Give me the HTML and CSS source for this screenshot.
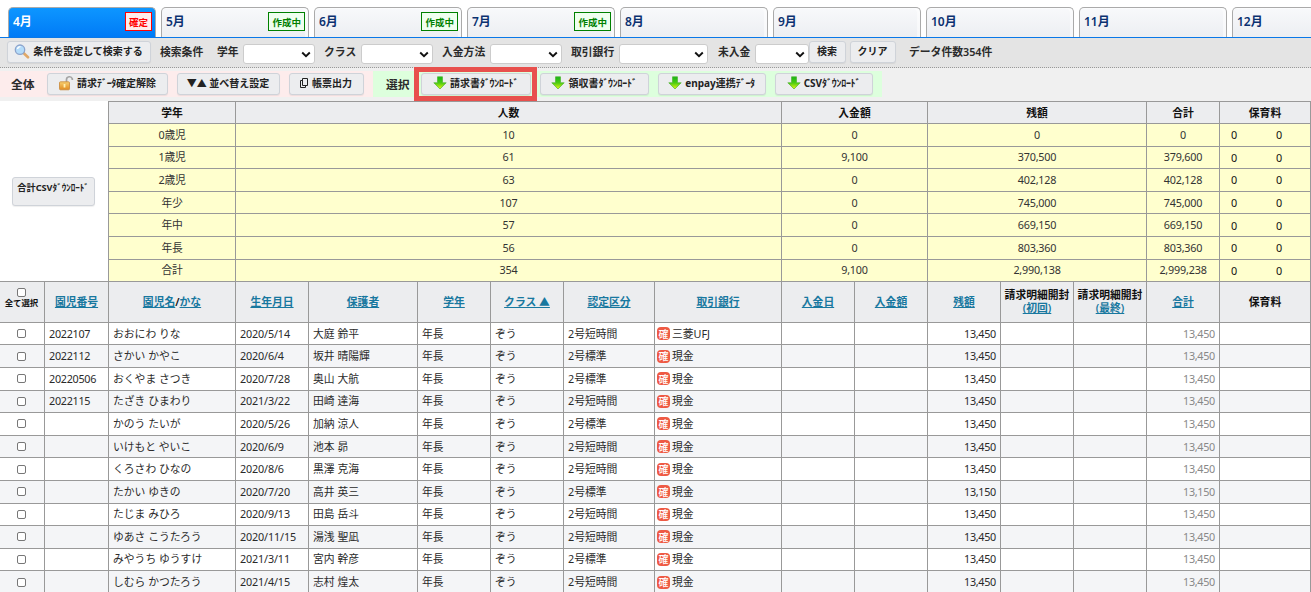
FILE: index.html
```html
<!DOCTYPE html>
<html lang="ja">
<head>
<meta charset="utf-8">
<title>請求一覧</title>
<link rel="stylesheet" href="styles.css">
</head>
<body>
<svg class="defs" width="0" height="0">
  <defs>
    <linearGradient id="green" x1="0" y1="0" x2="0" y2="1"><stop offset="0" stop-color="#18b418"/><stop offset=".5" stop-color="#4ccc10"/><stop offset="1" stop-color="#e8f818"/></linearGradient>
    <linearGradient id="gold" x1="0" y1="0" x2="0" y2="1"><stop offset="0" stop-color="#f8d070"/><stop offset="1" stop-color="#e08a20"/></linearGradient>
    <symbol id="down" viewBox="0 0 14 14"><path d="M4.500.8h5v6h3.700L7 13 .8 6.800h3.700z" fill="url(#green)" stroke="#4fb430" stroke-width=".7"/></symbol>
  </defs>
</svg>
<nav class="tabs">
  <div class="tab active">4月<span class="badge fixed">確定</span></div>
  <div class="tab">5月<span class="badge">作成中</span></div>
  <div class="tab">6月<span class="badge">作成中</span></div>
  <div class="tab">7月<span class="badge">作成中</span></div>
  <div class="tab">8月</div>
  <div class="tab">9月</div>
  <div class="tab">10月</div>
  <div class="tab">11月</div>
  <div class="tab">12月</div>
</nav>
<div class="search">
  <button class="btn b-cond"><svg width="16" height="15" viewBox="0 0 16 15"><path d="M9.500 9l4.500 4.300" stroke="#e0a868" stroke-width="2.600" stroke-linecap="round"/><circle cx="6" cy="5.700" r="4.700" fill="#b4dcfa" stroke="#8ca4cc" stroke-width="1.300"/><path d="M3.500 5a3 3 0 0 1 3-2.300" stroke="#fff" stroke-width="1.300" fill="none"/></svg>条件を設定して検索する</button>
  <span class="lab l-cond">検索条件</span>
  <span class="lab l-grade">学年</span><span class="sel"><svg width="10" height="7" viewBox="0 0 10 7"><path d="M1.200 1.500L5 5.200l3.800-3.700"/></svg></span>
  <span class="lab l-class">クラス</span><span class="sel"><svg width="10" height="7" viewBox="0 0 10 7"><path d="M1.200 1.500L5 5.200l3.800-3.700"/></svg></span>
  <span class="lab l-pay">入金方法</span><span class="sel"><svg width="10" height="7" viewBox="0 0 10 7"><path d="M1.200 1.500L5 5.200l3.800-3.700"/></svg></span>
  <span class="lab l-bank">取引銀行</span><span class="sel wide"><svg width="10" height="7" viewBox="0 0 10 7"><path d="M1.200 1.500L5 5.200l3.800-3.700"/></svg></span>
  <span class="lab l-unpaid">未入金</span><span class="sel small"><svg width="10" height="7" viewBox="0 0 10 7"><path d="M1.200 1.500L5 5.200l3.800-3.700"/></svg></span>
  <button class="btn b-find">検索</button>
  <button class="btn b-clear">クリア</button>
  <span class="lab l-count">データ件数354件</span>
</div>
<div class="actions">
  <div class="group all">
    <span class="title">全体</span>
    <button class="btn b-unlock"><svg width="16" height="16" viewBox="0 0 16 16"><path d="M8.500 7V4.500a3 3 0 0 1 5.800-.8V5" fill="none" stroke="#a4a4a4" stroke-width="1.700"/><rect x="1.500" y="6.800" width="10" height="8" rx="1" fill="url(#gold)" stroke="#c88838" stroke-width=".8"/><path d="M6.500 9v3.500" stroke="#fff0b0" stroke-width="1.800"/></svg><span>請求<span class="half">ﾃﾞｰﾀ</span>確定解除</span></button>
    <button class="btn b-sort">▼▲ 並べ替え設定</button>
    <button class="btn b-print"><svg width="9" height="11" viewBox="0 0 9 11"><path d="M2.500.5h5v7h-5zM2.500 2.500h-2v7h5v-2" fill="none" stroke="#222" stroke-width="1"/></svg>帳票出力</button>
  </div>
  <div class="group picked">
    <span class="title">選択</span>
    <div class="focus"><button class="btn b-bill"><svg width="14" height="14"><use href="#down"/></svg><span>請求書<span class="half">ﾀﾞｳﾝﾛｰﾄﾞ</span></span></button></div>
    <button class="btn b-receipt"><svg width="14" height="14"><use href="#down"/></svg><span>領収書<span class="half">ﾀﾞｳﾝﾛｰﾄﾞ</span></span></button>
    <button class="btn b-enpay"><svg width="14" height="14"><use href="#down"/></svg><span>enpay連携<span class="half">ﾃﾞｰﾀ</span></span></button>
    <button class="btn b-csv"><svg width="14" height="14"><use href="#down"/></svg><span>CSV<span class="half">ﾀﾞｳﾝﾛｰﾄﾞ</span></span></button>
  </div>
</div>
<section class="summary">
  <div class="side"><button class="btn b-total">合計CSV<span class="half">ﾀﾞｳﾝﾛｰﾄﾞ</span></button></div>
  <div class="totals">
    <div class="srow shead"><div>学年</div><div>人数</div><div>入金額</div><div>残額</div><div>合計</div><div>保育料</div></div>
    <div class="srow"><div>0歳児</div><div>10</div><div>0</div><div>0</div><div>0</div><div class="pair"><span>0</span><span>0</span></div></div>
    <div class="srow"><div>1歳児</div><div>61</div><div>9,100</div><div>370,500</div><div>379,600</div><div class="pair"><span>0</span><span>0</span></div></div>
    <div class="srow"><div>2歳児</div><div>63</div><div>0</div><div>402,128</div><div>402,128</div><div class="pair"><span>0</span><span>0</span></div></div>
    <div class="srow"><div>年少</div><div>107</div><div>0</div><div>745,000</div><div>745,000</div><div class="pair"><span>0</span><span>0</span></div></div>
    <div class="srow"><div>年中</div><div>57</div><div>0</div><div>669,150</div><div>669,150</div><div class="pair"><span>0</span><span>0</span></div></div>
    <div class="srow"><div>年長</div><div>56</div><div>0</div><div>803,360</div><div>803,360</div><div class="pair"><span>0</span><span>0</span></div></div>
    <div class="srow"><div>合計</div><div>354</div><div>9,100</div><div>2,990,138</div><div>2,999,238</div><div class="pair"><span>0</span><span>0</span></div></div>
  </div>
</section>
<section class="list">
  <div class="row head">
    <div class="checkall"><input type="checkbox"><span>全て選択</span></div>
    <div><a>園児番号</a></div><div><a>園児名</a>/<a>かな</a></div><div><a>生年月日</a></div><div><a>保護者</a></div><div><a>学年</a></div><div><a>クラス ▲</a></div><div><a>認定区分</a></div><div><a>取引銀行</a></div><div><a>入金日</a></div><div><a>入金額</a></div><div><a>残額</a></div>
    <div class="two"><span>請求明細開封</span><a>(初回)</a></div><div class="two"><span>請求明細開封</span><a>(最終)</a></div><div><a>合計</a></div><div>保育料</div>
  </div>
  <div class="row"><div><input type="checkbox"></div><div>2022107</div><div>おおにわ りな</div><div>2020/5/14</div><div>大庭 鈴平</div><div>年長</div><div>ぞう</div><div>2号短時間</div><div><b>確</b>三菱UFJ</div><div></div><div></div><div>13,450</div><div></div><div></div><div>13,450</div><div></div></div>
  <div class="row"><div><input type="checkbox"></div><div>2022112</div><div>さかい かやこ</div><div>2020/6/4</div><div>坂井 晴陽輝</div><div>年長</div><div>ぞう</div><div>2号標準</div><div><b>確</b>現金</div><div></div><div></div><div>13,450</div><div></div><div></div><div>13,450</div><div></div></div>
  <div class="row"><div><input type="checkbox"></div><div>20220506</div><div>おくやま さつき</div><div>2020/7/28</div><div>奥山 大航</div><div>年長</div><div>ぞう</div><div>2号標準</div><div><b>確</b>現金</div><div></div><div></div><div>13,450</div><div></div><div></div><div>13,450</div><div></div></div>
  <div class="row"><div><input type="checkbox"></div><div>2022115</div><div>たざき ひまわり</div><div>2021/3/22</div><div>田崎 達海</div><div>年長</div><div>ぞう</div><div>2号短時間</div><div><b>確</b>現金</div><div></div><div></div><div>13,450</div><div></div><div></div><div>13,450</div><div></div></div>
  <div class="row"><div><input type="checkbox"></div><div></div><div>かのう たいが</div><div>2020/5/26</div><div>加納 涼人</div><div>年長</div><div>ぞう</div><div>2号標準</div><div><b>確</b>現金</div><div></div><div></div><div>13,450</div><div></div><div></div><div>13,450</div><div></div></div>
  <div class="row"><div><input type="checkbox"></div><div></div><div>いけもと やいこ</div><div>2020/6/9</div><div>池本 昴</div><div>年長</div><div>ぞう</div><div>2号短時間</div><div><b>確</b>現金</div><div></div><div></div><div>13,450</div><div></div><div></div><div>13,450</div><div></div></div>
  <div class="row"><div><input type="checkbox"></div><div></div><div>くろさわ ひなの</div><div>2020/8/6</div><div>黒澤 克海</div><div>年長</div><div>ぞう</div><div>2号短時間</div><div><b>確</b>現金</div><div></div><div></div><div>13,450</div><div></div><div></div><div>13,450</div><div></div></div>
  <div class="row"><div><input type="checkbox"></div><div></div><div>たかい ゆきの</div><div>2020/7/20</div><div>高井 英三</div><div>年長</div><div>ぞう</div><div>2号標準</div><div><b>確</b>現金</div><div></div><div></div><div>13,150</div><div></div><div></div><div>13,150</div><div></div></div>
  <div class="row"><div><input type="checkbox"></div><div></div><div>たじま みひろ</div><div>2020/9/13</div><div>田島 岳斗</div><div>年長</div><div>ぞう</div><div>2号短時間</div><div><b>確</b>現金</div><div></div><div></div><div>13,450</div><div></div><div></div><div>13,450</div><div></div></div>
  <div class="row"><div><input type="checkbox"></div><div></div><div>ゆあさ こうたろう</div><div>2020/11/15</div><div>湯浅 聖凪</div><div>年長</div><div>ぞう</div><div>2号短時間</div><div><b>確</b>現金</div><div></div><div></div><div>13,450</div><div></div><div></div><div>13,450</div><div></div></div>
  <div class="row"><div><input type="checkbox"></div><div></div><div>みやうち ゆうすけ</div><div>2021/3/11</div><div>宮内 幹彦</div><div>年長</div><div>ぞう</div><div>2号標準</div><div><b>確</b>現金</div><div></div><div></div><div>13,450</div><div></div><div></div><div>13,450</div><div></div></div>
  <div class="row"><div><input type="checkbox"></div><div></div><div>しむら かつたろう</div><div>2021/4/15</div><div>志村 煌太</div><div>年長</div><div>ぞう</div><div>2号短時間</div><div><b>確</b>現金</div><div></div><div></div><div>13,450</div><div></div><div></div><div>13,450</div><div></div></div>
</section>
</body>
</html>
```

FILE: styles.css
```css
* { box-sizing: border-box; }
html, body { margin: 0; height: 592px; overflow: hidden; }
body {
  width: 1311px;
  background: #fff;
  color: #2a2a2a;
  font: 10.8px/14px "Noto Sans", "Noto Sans CJK JP", sans-serif;
}
.defs { position: absolute; }

/* Month tabs */
.tabs {
  display: flex;
  gap: 5px;
  height: 38px;
  padding: 7px 0 0 8px;
  border-bottom: 1px solid #0a78e8;
  overflow: hidden;
}
.tab {
  flex: 0 0 148px;
  display: flex;
  justify-content: space-between;
  height: 31px;
  padding: 4px 3px 0 4px;
  border: 1px solid #aaa;
  border-bottom: 0;
  border-radius: 5px 5px 0 0;
  background: linear-gradient(#f8f9fb, #eceef2);
  box-shadow: inset -3px 1px 1px #fff8;
  color: #0b3170;
  font-size: 12px;
  font-weight: 600;
  line-height: 20px;
}
.tab.active { background: linear-gradient(#0d96ff, #007af6); box-shadow: none; color: #fff; }
.badge {
  height: 19px;
  padding: 0 3px;
  border: 1px solid #008000;
  background: #efffef;
  color: #008000;
  font-size: 9.500px;
  font-weight: 700;
  line-height: 19px;
}
.badge.fixed { border-color: #f00; background: #ffecec; color: #f00; }

.btn {
  display: flex;
  flex: none;
  align-items: center;
  justify-content: center;
  height: 22px;
  margin: 0;
  padding: 0 1px 2px 0;
  border: 1px solid #cfd3d9;
  border-radius: 3px;
  background: #ecedef;
  box-shadow: 0 1px 1px #0001;
  color: #222;
  font: 700 10px/14px "Noto Sans", "Noto Sans CJK JP", sans-serif;
  white-space: nowrap;
}
.btn svg { margin-right: 3px; flex: none; }
.half { letter-spacing: -0.3px; }

/* Search conditions */
.search {
  display: flex;
  align-items: flex-start;
  height: 30px;
  padding: 3px 0 0 7px;
  border-bottom: 1px dotted #999;
  background: #e4e4e4;
}
.lab { flex: none; padding-top: 4px; font-weight: 600; white-space: nowrap; }
.l-cond { width: 66px; padding-left: 9px; }
.l-grade { width: 26px; }
.l-class { width: 46px; padding-left: 9px; }
.l-pay { width: 57px; padding-left: 9px; }
.l-bank { width: 57px; padding-left: 9px; }
.l-unpaid { width: 47px; padding-left: 10px; }
.l-count { padding-left: 13px; }
.sel {
  flex: none;
  display: flex;
  align-items: center;
  justify-content: flex-end;
  width: 72px;
  height: 20px;
  margin-top: 3px;
  padding: 0 3px 0 0;
  border: 1px solid #ccc;
  border-radius: 3px;
  background: #fff;
}
.sel.wide { width: 89px; }
.sel.small { width: 54px; }
.sel path { fill: none; stroke: #111; stroke-width: 1.9; }
.b-cond { width: 144px; }
.b-find { width: 37px; }
.b-clear { width: 46px; margin-left: 4px; }

/* Bulk actions */
.actions { display: flex; height: 33px; padding-top: 3px; background: #f0f0f0; }
.group { display: flex; height: 26px; align-items: flex-start; padding-top: 2px; }
.group.all { width: 373px; padding-left: 11px; background: #fdecec; }
.group.all .title { width: 36px; }
.group.picked { width: 509px; padding-left: 13px; background: #dfd; }
.title { flex: none; width: 35px; padding-top: 4px; font-size: 11.8px; font-weight: 600; }
.b-unlock { width: 121px; }
.b-sort { width: 103px; margin-left: 9px; }
.b-print { width: 75px; margin-left: 9px; }
.focus { position: relative; }
.focus::after {
  content: "";
  position: absolute;
  inset: -6px -6px -6px -7px;
  border: 5px solid #e8504d;
}
.b-bill { width: 110px; }
.b-receipt { width: 109px; margin-left: 9px; }
.b-enpay { width: 108px; margin-left: 9px; }
.b-csv { width: 98px; margin-left: 9px; }

/* Totals by grade */
.summary { display: flex; }
.side {
  width: 109px;
  padding: 76px 0 0 12px;
  border-right: 1px solid #999;
  border-bottom: 1px solid #999;
}
.b-total { width: 83px; height: 29px; padding-bottom: 8px; font-size: 9.200px; }
.b-total .half { letter-spacing: -0.1px; }
.totals { flex: none; width: 1202px; }
.srow { display: grid; grid-template-columns: 127px 546px 146px 219px 73px 91px; height: 22.6px; }
.srow > div {
  display: flex;
  align-items: center;
  justify-content: center;
  border-right: 1px solid #999;
  border-bottom: 1px solid #999;
  background: #ffffce;
  color: #333;
  letter-spacing: -0.2px;
}
.srow.shead { height: 23px; }
.srow.shead > div { border-top: 1px solid #999; background: #ecedef; color: #111; font-weight: 600; letter-spacing: 0; }
.srow > .pair { justify-content: flex-start; padding: 1px 0 0 11px; gap: 39px; color: #111; }

/* Children list */
.row {
  display: grid;
  grid-template-columns: 45px 64px 127px 73px 109px 73px 73px 91px 127px 73px 73px 73px 73px 73px 73px 91px;
  height: 22.6px;
}
.row > div {
  display: flex;
  align-items: center;
  padding-left: 4px;
  border-right: 1px solid #999;
  border-bottom: 1px solid #999;
  white-space: nowrap;
}
.row:nth-child(odd) > div { background: #f4f5f7; }
.row > div:first-child { justify-content: center; padding: 0 2px 0 0; }
.row > div:nth-child(2) { letter-spacing: -0.3px; }
.row > div:nth-child(4) { letter-spacing: -0.15px; }
.row > div:nth-child(9) { padding-left: 2px; }
.row > div:nth-child(12), .row > div:nth-child(15) { justify-content: flex-end; padding: 0 4px 0 0; letter-spacing: -0.3px; }
.row > div:nth-child(15) { color: #888; }
.row.head { height: 40.6px; }
.row.head > div {
  justify-content: center;
  padding: 0;
  background: #ecedef;
  color: #111;
  font-weight: 600;
  letter-spacing: 0;
}
.row.head > .checkall { flex-direction: column; gap: 0; padding: 0 1px 7px 0; font-size: 8.4px; line-height: 12px; }
.row.head > .two { flex-direction: column; padding-bottom: 1px; line-height: 13px; }
a { color: #18789f; text-decoration: underline; }
input {
  appearance: none;
  width: 9px;
  height: 9px;
  margin: 0;
  border: 1px solid #777;
  border-radius: 2px;
  background: #fff;
}
.row b {
  display: flex;
  align-items: center;
  justify-content: center;
  width: 13px;
  height: 13px;
  margin-right: 2px;
  border-radius: 4px;
  background: #ee5a44;
  color: #fff;
  font-size: 10px;
  font-weight: 500;
  line-height: 12px;
}
```
